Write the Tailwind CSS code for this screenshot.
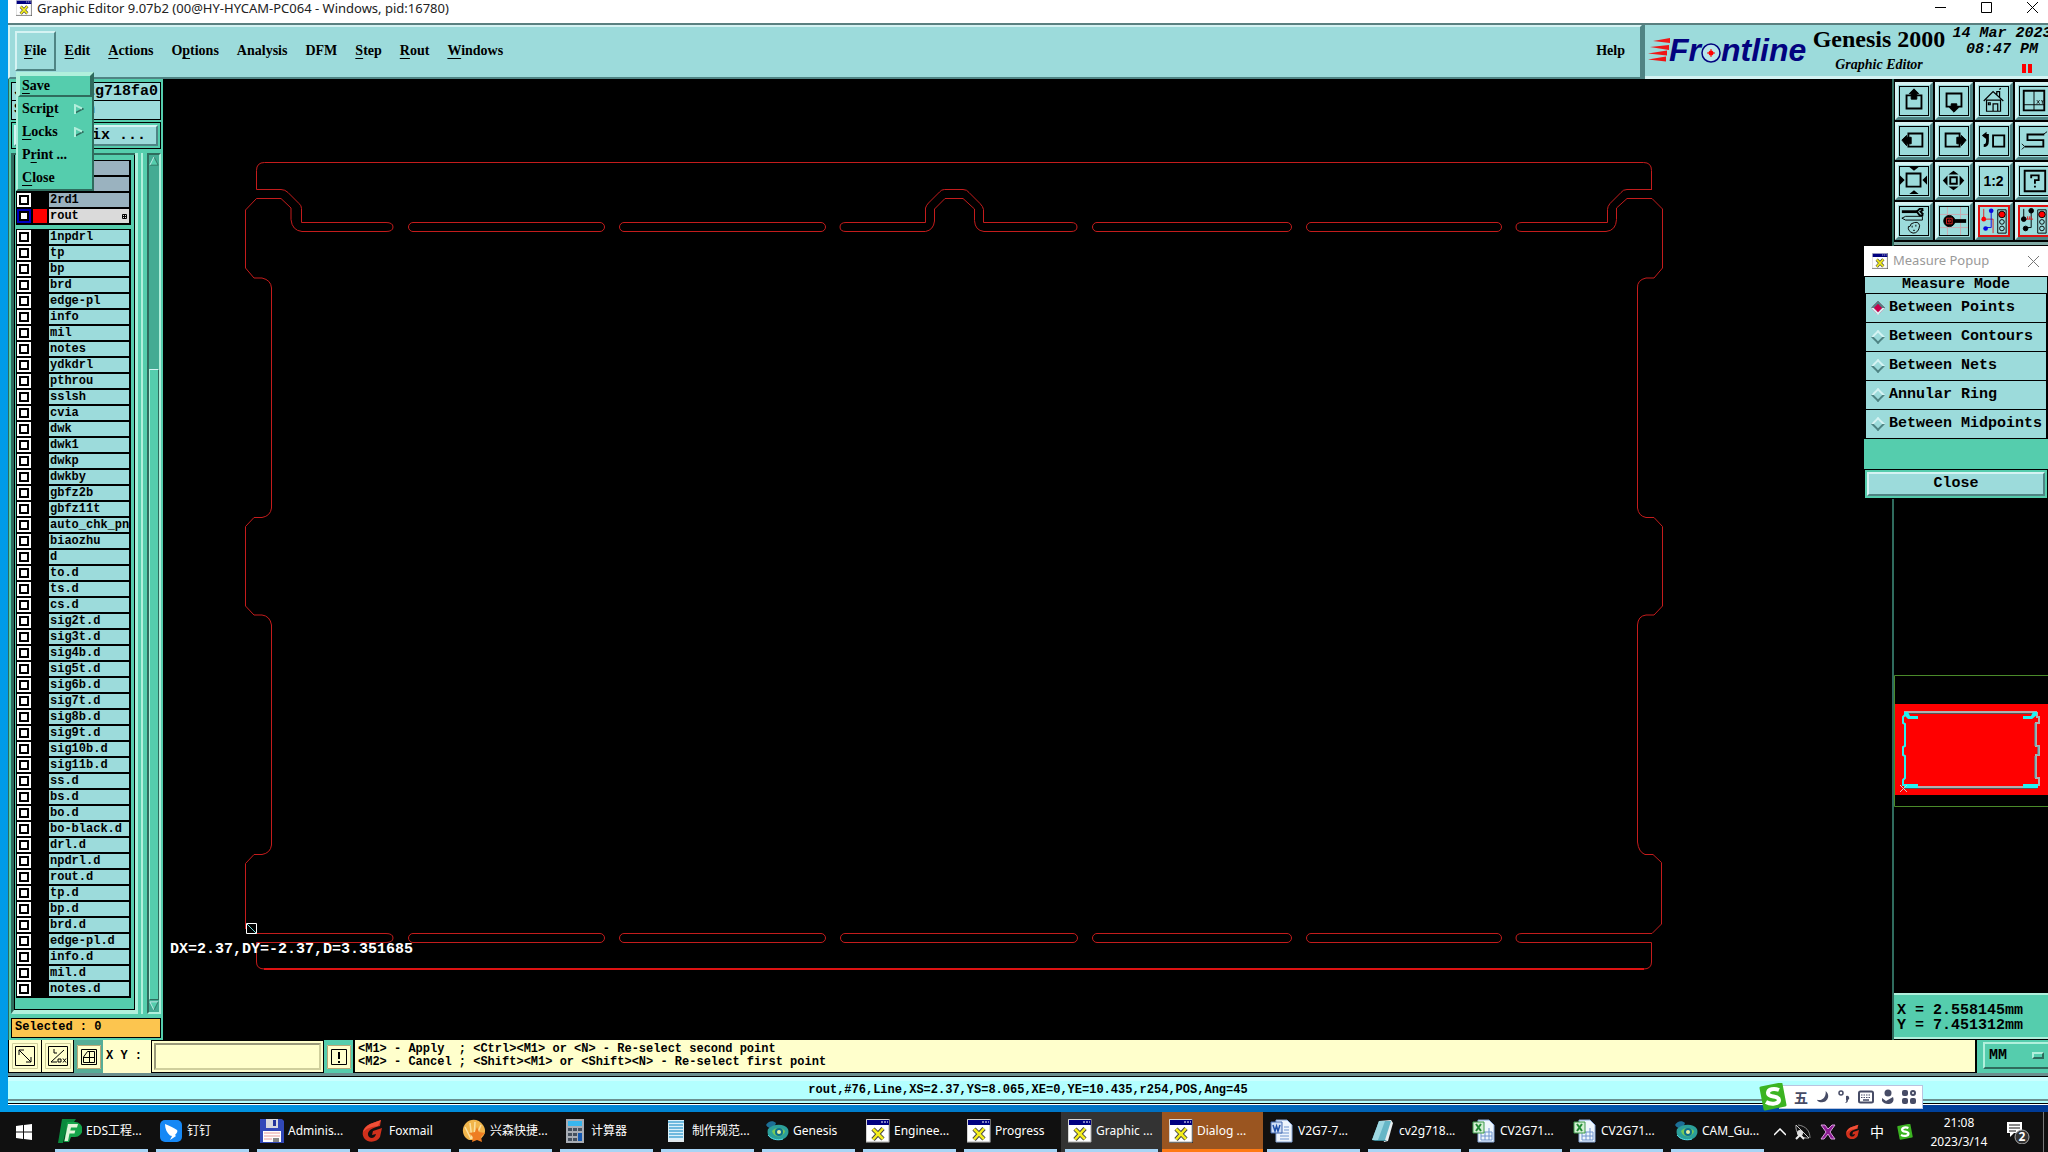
<!DOCTYPE html>
<html lang="en">
<head>
    <meta charset="UTF-8">
    <meta name="viewport" content="width=device-width, initial-scale=1.0">
    <title>Graphic Editor 9.07b2</title>
    <script src="https://cdn.jsdelivr.net/npm/@tailwindcss/browser@4"></script>
</head>
<body class="h-screen overflow-hidden flex flex-col bg-linear-to-r from-[#009be8] via-[#0078c8] to-[#003a96] text-black">

    <!-- Shared icons -->
    <svg class="hidden">
        <symbol id="i-x" viewBox="0 0 24 24">
            <path d="M0 0h24v24H0z" fill="#333"/><path d="M0 0h23v23H0z" fill="#fff" stroke="#aaa"/><path d="M1 1h22v5H1z" fill="#000080"/>
            <path d="M15 3h2M18 3h2M21 3h1" stroke="#fff"/><path d="M7 10l10 10M17 9.500L7 20.500" stroke="#444" stroke-width="4.500"/><path d="M7 10l10 10M17 9.500L7 20.500" stroke="#f4ee1c" stroke-width="2.600"/>
        </symbol>
        <symbol id="i-eds" viewBox="0 0 24 24">
            <path d="M4 0h14l-4 6H9L5 24H0z" fill="#0a8a3c"/><path d="M9 3h8a7 7 0 0 1 0 15h-4l-2 5H6z" fill="#14a44a"/><path d="M10 5h10l-1 3.500h-6l-.7 3h5l-.8 3h-5L10 22H6.500z" fill="#dff5d8"/>
        </symbol>
        <symbol id="i-ding" viewBox="0 0 24 24">
            <rect x="1" y="1" width="22" height="22" rx="5" fill="#1688f5"/><path d="M6 5c5 2 9 4 12 6 1 1 0 3-2 5l1 1-6 4 2-4-2-.500C8 14 6 10 6 5z" fill="#fff"/>
        </symbol>
        <symbol id="i-disk" viewBox="0 0 24 24">
            <path d="M1 0h21l2 2v22H0V0z" fill="#3148b8"/><path d="M6 0h12v9H6z" fill="#d6d8de"/><path d="M13 1h3v6h-3z" fill="#24349a"/><path d="M3 12h18v11H3z" fill="#fff"/><path d="M4 14h16M4 17h16M4 20h8" stroke="#e69a9a"/><path d="M13 19h6v4h-6z" fill="#888"/>
        </symbol>
        <symbol id="i-fox" viewBox="0 0 24 24">
            <path d="M20 1L9 5C2 8 0 14 3 19c3 5 13 5 16-1l2-9-9 3-1 4 4-1c-1 5-7 5-8 1-.500-4 3-7 12-9z" fill="#d0301c"/><path d="M20 1L9 5C5 7 3 10 2 13c4-4 8-5 15-6z" fill="#ef5038"/>
        </symbol>
        <symbol id="i-shell" viewBox="0 0 24 24">
            <path d="M7 21C0 18-1 9 4 4s13-4 17 2 2 11-4 15z" fill="#f1b54b"/><path d="M9 20L3 8M10 20L8 4M12 20l1-17M13 20l6-14" stroke="#fbe0a0" stroke-width="1.500"/><path d="M15 8l2 5 6 1-4 4 1 5-5-2-5 2 1-5-4-4 6-1z" fill="#ee7d22"/>
        </symbol>
        <symbol id="i-calc" viewBox="0 0 24 24">
            <path d="M3 0h18v24H3z" fill="#a8adb5"/><path d="M5 2h14v5H5z" fill="#37b6ee"/><path d="M5 9h4v3H5zM10 9h4v3h-4zM15 9h4v3h-4zM5 14h4v3H5zM10 14h4v3h-4zM5 19h4v3H5zM10 19h4v3h-4z" fill="#45505e"/><path d="M15 14h4v8h-4z" fill="#1458b0"/>
        </symbol>
        <symbol id="i-note" viewBox="0 0 24 24">
            <path d="M4 1h16v21H4z" fill="#d9f0fa"/><path d="M4 3h16M5 6h14M5 9h14M5 12h14M5 15h14M5 18h14" stroke="#4aa7d5" stroke-width="1.500"/><path d="M4 21h16v2H4z" fill="#dfe6ea"/>
        </symbol>
        <symbol id="i-gen" viewBox="0 0 24 24">
            <path d="M1 6c2-4 7-5 10-2l-2 5c-3 1-6 0-8-3z" fill="#1c6f96"/><path d="M3 10c5-5 16-6 20 0 2 6-3 11-10 11S1 17 3 10z" fill="#2ba09a"/><path d="M7 12c3-4 10-4 13 0-1 6-11 8-13 0z" fill="#74c85a"/><circle cx="14" cy="13" r="4" fill="#0c6f8f"/><circle cx="14" cy="13" r="2" fill="#e8f0a0"/><path d="M3 16c3 4 9 6 15 4" stroke="#54dce8" fill="none"/>
        </symbol>
        <symbol id="i-word" viewBox="0 0 24 24">
            <path d="M6 1h11l5 5v17H6z" fill="#eef4fc" stroke="#8aa8d8"/><path d="M10 14h9M10 17h9M10 20h9M14 11h5M14 8h5" stroke="#6f94cf"/><path d="M1 3h11v11H1z" fill="#cfdef5" stroke="#4368b0"/><path d="M3 6l2 6 1.500-5L8 12l2-6" fill="none" stroke="#1f4fa8" stroke-width="1.500"/>
        </symbol>
        <symbol id="i-book" viewBox="0 0 24 24">
            <path d="M8 2l12-1 2 3-5 18-4 1z" fill="#e8eef0"/><path d="M8 2h12l-6 19H1z" fill="#66b6c6"/><path d="M8 2h6L7 21H1z" fill="#9ed8e2"/><path d="M1 21h13l2 1H4z" fill="#3b8797"/>
        </symbol>
        <symbol id="i-excel" viewBox="0 0 24 24">
            <path d="M6 1h11l5 5v17H6z" fill="#eef6fc" stroke="#8aa8d8"/><path d="M9 13h11v8H9zM9 17h11M13 13v8M17 9v12" fill="none" stroke="#6f94cf"/><path d="M1 3h11v11H1z" fill="#d3efd3" stroke="#3d9a4a"/><path d="M4 5l5 7M9 5l-5 7" stroke="#1f8a35" stroke-width="2"/>
        </symbol>
        <symbol id="i-sogou" viewBox="0 0 28 28">
            <path d="M2 5L22 1l4 21-20 4z" fill="#3cb422" stroke="#3cb422" stroke-width="3" stroke-linejoin="round"/><path d="M20 7c-5-2-11-1-11 3 0 5 11 2 11 7 0 4-8 5-13 2" fill="none" stroke="#fff" stroke-width="4"/>
        </symbol>
    </svg>

    <!-- Application window -->
    <div class="ml-2 flex-1 min-h-0 flex flex-col relative bg-black">
        <header class="h-[23px] bg-white flex items-start pl-2 text-[13px] leading-4 font-['Noto_Sans',sans-serif] text-[#222]">
            <svg class="size-4"><use href="#i-x"/></svg>
            <span class="ml-[5px] whitespace-nowrap">Graphic Editor 9.07b2 (00@HY-HYCAM-PC064 - Windows, pid:16780)</span>
            <div class="ml-auto flex pr-[10px] gap-[35px]">
                <button aria-label="Minimize"><svg class="size-[11px] mt-[2px]" viewBox="0 0 11 11"><path d="M0 5.500h11" stroke="#000"/></svg></button>
                <button aria-label="Maximize"><svg class="size-[11px] mt-[2px]" viewBox="0 0 11 11"><path d="M.5.5h10v10H.5z" fill="none" stroke="#000"/></svg></button>
                <button aria-label="Close window"><svg class="size-[11px] mt-[2px]" viewBox="0 0 11 11"><path d="M0 0l11 11M11 0L0 11" stroke="#000"/></svg></button>
            </div>
        </header>

        <div class="h-14 flex bg-[#9cdbdb] border-t-2 border-[#5a8080]">
            <nav class="flex-1 flex items-start border-2 border-t-[#d5f3f3] border-l-[#d5f3f3] border-r-[#4f8484] border-b-[#4f8484] pl-[5px] pr-[6px] pt-1 font-['Liberation_Serif',serif] font-bold text-sm">
                <button class="h-10 px-[7px] border-2 border-t-[#d5f3f3] border-l-[#d5f3f3] border-r-[#4f8484] border-b-[#4f8484]"><u class="underline-offset-3">F</u>ile</button>
                <button class="h-10 px-[7px] border-2 border-transparent"><u class="underline-offset-3">E</u>dit</button>
                <button class="h-10 px-[7px] border-2 border-transparent"><u class="underline-offset-3">A</u>ctions</button>
                <button class="h-10 px-[7px] border-2 border-transparent">O<u class="underline-offset-3">p</u>tions</button>
                <button class="h-10 px-[7px] border-2 border-transparent">Analysis</button>
                <button class="h-10 px-[7px] border-2 border-transparent">DFM</button>
                <button class="h-10 px-[7px] border-2 border-transparent"><u class="underline-offset-3">S</u>tep</button>
                <button class="h-10 px-[7px] border-2 border-transparent"><u class="underline-offset-3">R</u>out</button>
                <button class="h-10 px-[7px] border-2 border-transparent"><u class="underline-offset-3">W</u>indows</button>
                <button class="h-10 px-[7px] border-2 border-transparent ml-auto">Help</button>
            </nav>
            <div class="w-[406px] shrink-0 flex overflow-hidden border-l-3 border-[#4f8484] shadow-[inset_0_-3px_#d5f3f3]">
                <svg class="w-[166px] h-[51px] shrink-0" viewBox="0 0 166 51">
                    <g fill="#ef1616">
                        <path d="M8 16l17-3v5zM5 22l19-2v5zM3 28.500l19-3v5zM3 34.500l18-3v5z"/>
                    </g>
                    <g class="font-['Liberation_Sans',sans-serif] font-bold italic text-[32px]" fill="#03037f">
                        <text x="24" y="36">Fr</text><text x="76" y="36">ntline</text>
                    </g>
                    <circle cx="66" cy="28" r="9" fill="#b9e6ea" stroke="#03037f" stroke-width="1.500"/>
                    <circle cx="66" cy="28" r="2.500" fill="#f00"/><path d="M62 28h8M66 24v8" stroke="#f00"/>
                </svg>
                <div class="w-[136px] shrink-0 text-center font-['Liberation_Serif',serif] font-bold whitespace-nowrap">
                    <div class="text-2xl leading-7">Genesis 2000</div>
                    <div class="text-sm leading-6 italic">Graphic Editor</div>
                </div>
                <div class="w-[110px] shrink-0 pt-px text-center font-['Liberation_Mono',monospace] font-bold italic text-[15px] leading-4">
                    <div>14 Mar 2023</div>
                    <div>08:47 PM</div>
                    <div class="flex gap-[2px] justify-end pr-[25px] pt-[6px]"><i class="w-1 h-[9px] bg-[#f00]"></i><i class="w-1 h-[9px] bg-[#f00]"></i></div>
                </div>
            </div>
        </div>

        <main class="flex-1 min-h-0 flex">
            <!-- Layer list -->
            <aside class="w-[155px] shrink-0 bg-[#55cdad] border-l border-[#2f6b5d] px-[2px] pt-[3px] pb-[2px] flex flex-col font-['Liberation_Mono',monospace] font-bold">
                <div class="border border-black bg-[#9cdbdb] text-[15px] leading-[17px] whitespace-nowrap">
                    <div class="h-[18px] border-b border-black overflow-hidden pl-[2px]">Job : cv2g718fa0</div>
                    <div class="h-[18px] overflow-hidden pl-[2px]">Step: pan</div>
                </div>
                <div class="border border-black mt-[2px] p-[2px] bg-[#55cdad]">
                    <button class="block w-full h-[21px] bg-[#9cdbdb] border-2 border-t-[#d5f3f3] border-l-[#d5f3f3] border-r-[#4f8484] border-b-[#4f8484] text-[15px] leading-4 text-left pl-10 whitespace-nowrap">Matrix ...</button>
                </div>
                <div class="mt-1 flex-1 min-h-0 flex">
                    <div class="w-[124px] border-l-3 border-[#2f6b5d] border-t-2 border-b-4 border-b-[#b0f0dc] flex flex-col">
                        <div class="flex-1 min-h-0 border-x border-b border-black pl-px pr-[3px] overflow-hidden">
                            <div id="board" class="bg-black border-t border-black mt-[5px]"></div>
                            <div id="layers" class="bg-black border-t border-black mt-1"></div>
                        </div>
                    </div>
                    <div class="w-[3px] bg-[#b0f0dc]"></div>
                    <div class="w-[3px] bg-[#55cdad]"></div>
                    <div class="w-[2px] bg-[#b0f0dc]"></div>
                    <div class="w-[4px] bg-[#55cdad]"></div>
                    <div class="flex-1 bg-[#44ab93] border-2 border-t-[#2f6b5d] border-l-[#2f6b5d] border-r-[#b0f0dc] border-b-[#b0f0dc] flex flex-col">
                        <svg class="w-full h-3 shrink-0" viewBox="0 0 12 12"><path d="M6 1l5 10H1z" fill="#55cdad"/><path d="M6 1l5 10H1" fill="none" stroke="#2f6b5d"/><path d="M6 1L1 11" stroke="#d5f3f3"/></svg>
                        <div class="h-[202px]"></div>
                        <div class="flex-1 bg-[#55cdad] border border-t-[#d5f3f3] border-l-[#b0f0dc] border-r-[#2f6b5d] border-b-[#2f6b5d]"></div>
                        <svg class="w-full h-3 shrink-0" viewBox="0 0 12 12"><path d="M6 11L1 1h10z" fill="#55cdad"/><path d="M11 1H1l5 10" fill="none" stroke="#d5f3f3"/><path d="M6 11l5-10" stroke="#2f6b5d"/></svg>
                    </div>
                </div>
                <div class="mt-1 border border-black bg-[#fcc54f] h-5 text-xs leading-4 pl-[3px]">Selected : 0</div>
            </aside>

            <!-- Drawing area -->
            <section class="flex-1 min-w-0 relative bg-black overflow-hidden">
                <svg class="w-full h-full" viewBox="163 79 1729 961" fill="none" stroke="#c41c1c">
                    <!-- top strip with the upper half of the first, fourth and last slots -->
                    <path d="M1651.500 189.500V170.500q0-8-8-8H264.500q-8 0-8 8v19H281q4 0 7 3l11 11q2.500 2 2.500 5v14H386q7 0 7 4.500t-7 4.500H302q-10-1-11-12V208l-10-9.500H256.500L245.500 210v58l8.500 10h8q9 2 9.500 10V508q-1 8-9.500 9.500h-8l-8.500 9V606l8.500 9h8q8 1 9.500 10V845q-1 8-9.500 9.500h-8l-8.500 9V929"/>
                    <path d="M1652 189.500H1627q-4 0-6 3l-11 11q-2.500 3-2.500 6v13H1522q-6 0-6 4.500t6 4.500H1606q10-1 10.500-12V208l10.500-9.500H1652L1662.500 209v59l-8.500 10h-8q-9 2-8.500 10V508q1 8 8.500 9.500h8l8.500 9V606l-8.500 9h-8q-8 1-8.500 10V842q1 10 7.500 12.500h8l8.500 8V924l-9.500 9.500H1522q-6 0-6 4.500t6 4.500H1651.500V962q0 7-8 7"/>
                    <path d="M846 222.500H925.500V208q1-3 3-5l11-11q2-2.500 5-2.500H963q4 0 6 3l11 11q3 3 3.500 6v13H1071q6 0 6 4.500t-6 4.500H984q-9-1-9.500-11V209l-11.500-10.500H945L934.500 209v12q-1 9-9 10.500H846q-6 0-6-4.500t6-4.500z"/>
                    <path d="M256.500 933.500H386q7 0 7 4.500t-7 4.500H256.500V962q0 7 8 7"/>
                    <path d="M264 969H1644" stroke="#dd1212" stroke-width="2"/>
                    <g>
                        <rect x="408.500" y="222.500" width="196" height="9" rx="4.500"/>
                        <rect x="619.500" y="222.500" width="206" height="9" rx="4.500"/>
                        <rect x="1092.500" y="222.500" width="199" height="9" rx="4.500"/>
                        <rect x="1306.500" y="222.500" width="195" height="9" rx="4.500"/>
                        <rect x="408.500" y="933.500" width="196" height="9" rx="4.500"/>
                        <rect x="619.500" y="933.500" width="206" height="9" rx="4.500"/>
                        <rect x="840.500" y="933.500" width="237" height="9" rx="4.500"/>
                        <rect x="1092.500" y="933.500" width="199" height="9" rx="4.500"/>
                        <rect x="1306.500" y="933.500" width="195" height="9" rx="4.500"/>
                    </g>
                    <!-- measure cursor -->
                    <path d="M246.500 923.500h10v10h-10z" fill="#000" stroke="#fff"/><path d="M247 924l9 9" stroke="#7dd"/>
                    <text x="170" y="953" fill="#fff" stroke="none" class="font-['Liberation_Mono',monospace] font-bold text-[15px]">DX=2.37,DY=-2.37,D=3.351685</text>
                </svg>
            </section>

            <!-- Tools and overview -->
            <aside class="w-[156px] shrink-0 overflow-hidden border-l-2 border-[#2f6b5d] flex flex-col">
                <div class="grid grid-cols-[repeat(4,38px)] gap-[2px] pl-px pt-[3px] pb-[2px] border-b-3 border-[#7fa9a4] shrink-0" id="tools"></div>
                <svg class="w-full h-[132px] mt-[430px] shrink-0" viewBox="0 0 154 132" fill="none">
                    <path d="M.5.5H160M.5.5V131.500H160" stroke="#4a8a2a"/>
                    <path d="M1 29h153v91H1z" fill="#f00"/>
                    <g stroke-width="2">
                        <path d="M10 37H143M10 112H143" stroke="#b0b0b0"/><path d="M10 38.500H143M10 113.500H143" stroke="#555" stroke-width="1"/>
                        <path d="M143 37v5l2 0v6l-3 0v23h3v9h-3v23h3v7h-2" stroke="#b0b0b0"/>
                        <path d="M11 40l-2 2v6l2 1v22l-2 1v8l2 1v22l-2 2v6" stroke="#28f0f0"/>
                        <path d="M141 48v23M144 71v9M141 81v22" stroke="#28b8c8" stroke-width="1"/>
                    </g>
                    <path d="M10 37h4l2 4h8v3H14l-4-4zM143 37h-4l-2 4h-8v3h9l5-4zM10 109h14v4H10zM129 109h15v4h-15z" fill="#1ff4f4"/>
                    <path d="M6 110l7 7M13 110l-7 7" stroke="#ccc"/>
                </svg>
                <div class="mt-auto mb-px bg-[#55cdad] border-y-2 border-[#b0f0dc] h-[46px] shrink-0 pl-[3px] pt-2 font-['Liberation_Mono',monospace] font-bold text-[15px] leading-[15px] whitespace-nowrap">
                    <div>X = 2.558145mm</div>
                    <div>Y = 7.451312mm</div>
                </div>
            </aside>
        </main>

        <!-- Command row -->
        <div class="h-[33px] flex bg-black pl-px gap-px font-['Liberation_Mono',monospace] font-bold text-xs">
            <button aria-label="Distance" class="w-8 bg-[#ffffcc] flex items-center justify-center mb-px"><svg class="size-[26px]" viewBox="0 0 26 26" fill="none"><path d="M.5.5h25v25H.5z" stroke="#cfcf9c"/><path d="M3.500 3.500h19v19h-19z" stroke="#000"/><path d="M7 7l12 12M7 12V7h5M19 14v5h-5" stroke="#000"/></svg></button>
            <button aria-label="Angle" class="w-[31px] bg-[#ffffcc] flex items-center justify-center mb-px"><svg class="size-[26px]" viewBox="0 0 26 26" fill="none"><path d="M.5.5h25v25H.5z" stroke="#cfcf9c"/><path d="M3.500 3.500h19v19h-19z" stroke="#000"/><path d="M6 19L19 7M6 19h6M9 6v4h3" stroke="#000"/><path d="M13 16h3v3h-3zM18 15.500l3 4M21 15.500l-3 4" stroke="#000"/></svg></button>
            <button aria-label="Grid" class="w-[29px] bg-[#55ad97] flex items-center justify-center"><svg class="size-6" viewBox="0 0 24 24" fill="none"><path d="M0 0h24v24H0z" fill="#ffffcc"/><path d="M.5.500h23v23H.5z" stroke="#b8a878"/><path d="M4.500 4.500h15v15h-15z" stroke="#000"/><path d="M6.500 17.500V12l4-5.500h7v11zM12.500 7v10M7 12.500h11" stroke="#000"/></svg></button>
            <label for="xy" class="w-12 bg-[#ffffcc] pl-[3px] leading-8 whitespace-pre -ml-px">X Y :</label>
            <div class="bg-[#ffffcc] p-[2px] w-[171px] my-px"><input id="xy" type="text" class="w-full h-full bg-[#ffffcc] border-2 border-t-[#99997a] border-l-[#99997a] border-r-[#cfcf9c] border-b-[#cfcf9c] px-1 outline-none"></div>
            <button aria-label="Alert" class="w-[29px] bg-[#55cdad] flex items-center justify-center"><svg class="size-6" viewBox="0 0 24 24" fill="none"><path d="M0 0h24v24H0z" fill="#ffffcc"/><path d="M.5.500h23v23H.5z" stroke="#b8a878"/><path d="M4.500 4.500h15v15h-15z" stroke="#000"/><path d="M12 7v7M12 16v2" stroke="#000" stroke-width="2"/></svg></button>
            <div class="flex-1 bg-[#ffffcc] pl-[3px] pt-[3px] ml-px mb-px leading-[13px] whitespace-pre">&lt;M1&gt; - Apply  ; &lt;Ctrl&gt;&lt;M1&gt; or &lt;N&gt; - Re-select second point
&lt;M2&gt; - Cancel ; &lt;Shift&gt;&lt;M1&gt; or &lt;Shift&gt;&lt;N&gt; - Re-select first point</div>
            <div class="w-[71px] ml-px bg-[#55cdad] pl-[6px] py-[2px] relative overflow-hidden">
                <select aria-label="Units" class="appearance-none w-[76px] h-[27px] bg-[#55cdad] border-2 border-t-[#b0f0dc] border-l-[#b0f0dc] border-r-[#2f6b5d] border-b-[#2f6b5d] pl-1 text-[15px]"><option>MM</option><option>INCH</option></select>
                <i class="absolute right-1 top-3 w-3 h-[7px] border-2 border-t-[#b0f0dc] border-l-[#b0f0dc] border-r-[#2f6b5d] border-b-[#2f6b5d]"></i>
            </div>
        </div>

        <!-- Status line -->
        <div class="h-8 bg-[#b3ffff] border-t-3 border-[#6a8f8f] flex flex-col">
            <div class="flex-1 border-y border-black flex flex-col pb-[2px]">
                <div class="flex-1 border-t-4 border-t-[#ccffff] border-b-2 border-b-[#6a8f8f] text-center leading-[18px] font-['Liberation_Mono',monospace] font-bold text-xs">rout,#76,Line,XS=2.37,YS=8.065,XE=0,YE=10.435,r254,POS,Ang=45</div>
            </div>
            <div class="h-[2px] bg-white"></div>
        </div>

        <!-- File menu -->
        <div class="absolute left-2 top-[72px] w-[78px] bg-[#55cdad] border-2 border-t-[#b0f0dc] border-l-[#b0f0dc] border-r-[#2f6b5d] border-b-[#2f6b5d] font-['Liberation_Serif',serif] font-bold text-sm leading-[23px]">
            <button class="block w-full h-[23px] text-left pl-[2px] border-2 border-t-[#b0f0dc] border-l-[#b0f0dc] border-r-[#2f6b5d] border-b-[#2f6b5d] leading-5"><u class="underline-offset-3">S</u>ave</button>
            <button class="flex w-full items-center pl-1 pr-2 justify-between"><span>Scri<u class="underline-offset-3">p</u>t</span><svg class="size-[10px]" viewBox="0 0 10 10"><path d="M1 1l8 4-8 4z" fill="#55cdad" stroke="#2f6b5d" stroke-width="1.500"/><path d="M1 10V1l7 3.500" fill="none" stroke="#b0f0dc" stroke-width="2"/></svg></button>
            <button class="flex w-full items-center pl-1 pr-2 justify-between"><span><u class="underline-offset-3">L</u>ocks</span><svg class="size-[10px]" viewBox="0 0 10 10"><path d="M1 1l8 4-8 4z" fill="#55cdad" stroke="#2f6b5d" stroke-width="1.500"/><path d="M1 10V1l7 3.500" fill="none" stroke="#b0f0dc" stroke-width="2"/></svg></button>
            <button class="block w-full text-left pl-1">P<u class="underline-offset-3">r</u>int ...</button>
            <button class="block w-full text-left pl-1"><u class="underline-offset-3">C</u>lose</button>
        </div>

        <!-- Measure popup -->
        <div class="absolute right-0 top-[246px] w-[184px] bg-[#55cdad] font-['Liberation_Mono',monospace] font-bold text-[15px]">
            <div class="h-[30px] bg-white flex items-center pl-2 pr-[9px] font-['Noto_Sans',sans-serif] font-normal text-[13px] text-[#999]">
                <svg class="size-4"><use href="#i-x"/></svg><span class="ml-[5px]">Measure Popup</span>
                <button aria-label="Close popup" class="ml-auto"><svg class="size-[11px]" viewBox="0 0 11 11"><path d="M0 0l11 11M11 0L0 11" stroke="#777"/></svg></button>
            </div>
            <fieldset>
                <legend class="w-full h-[18px] leading-4 border border-black bg-[#9cdbdb] text-center">Measure Mode</legend>
                <div class="border-x border-b border-black bg-black grid gap-px whitespace-nowrap">
                    <label class="h-7 bg-[#9cdbdb] flex items-center gap-[6px] pl-[7px] mx-px"><input type="radio" name="mode" checked class="appearance-none size-[10px] shrink-0 rotate-45 border-2 border-t-[#4f8484] border-l-[#4f8484] border-r-[#d5f3f3] border-b-[#d5f3f3] checked:bg-[#c8004c]">Between Points</label>
                    <label class="h-7 bg-[#9cdbdb] flex items-center gap-[6px] pl-[7px] mx-px"><input type="radio" name="mode" class="appearance-none size-[10px] shrink-0 rotate-45 border-2 border-t-[#d5f3f3] border-l-[#d5f3f3] border-r-[#4f8484] border-b-[#4f8484]">Between Contours</label>
                    <label class="h-7 bg-[#9cdbdb] flex items-center gap-[6px] pl-[7px] mx-px"><input type="radio" name="mode" class="appearance-none size-[10px] shrink-0 rotate-45 border-2 border-t-[#d5f3f3] border-l-[#d5f3f3] border-r-[#4f8484] border-b-[#4f8484]">Between Nets</label>
                    <label class="h-7 bg-[#9cdbdb] flex items-center gap-[6px] pl-[7px] mx-px"><input type="radio" name="mode" class="appearance-none size-[10px] shrink-0 rotate-45 border-2 border-t-[#d5f3f3] border-l-[#d5f3f3] border-r-[#4f8484] border-b-[#4f8484]">Annular Ring</label>
                    <label class="h-7 bg-[#9cdbdb] flex items-center gap-[6px] pl-[7px] mx-px"><input type="radio" name="mode" class="appearance-none size-[10px] shrink-0 rotate-45 border-2 border-t-[#d5f3f3] border-l-[#d5f3f3] border-r-[#4f8484] border-b-[#4f8484]">Between Midpoints</label>
                </div>
            </fieldset>
            <div class="mt-[30px] border border-black p-[2px]">
                <button class="block w-full h-6 leading-5 bg-[#9cdbdb] border-2 border-t-[#d5f3f3] border-l-[#d5f3f3] border-r-[#4f8484] border-b-[#4f8484]">Close</button>
            </div>
        </div>
    </div>

    <!-- Input method bar -->
    <div class="absolute right-[125px] bottom-[41px] flex items-center">
        <svg class="size-7 -mr-2 relative z-10"><use href="#i-sogou"/></svg>
        <div class="h-6 bg-white border border-[#b9c4e0] pl-[14px] pr-[6px] flex items-center gap-2 text-[#474c66] font-['Noto_Sans_CJK_SC',sans-serif] font-bold text-sm leading-5">
            <span>五</span>
            <svg class="size-[14px]" viewBox="0 0 16 16"><path d="M11 1c6 5 2 13-4 13-3 0-5-1-6-3 6 2 11-3 10-10z" fill="currentColor"/></svg>
            <svg class="w-3 h-4" viewBox="0 0 12 16"><circle cx="3" cy="4" r="2" fill="none" stroke="currentColor" stroke-width="1.500"/><path d="M8 7a2 2 0 1 1 2 4c0 2-1 3-3 3 1-1 2-2 1-3z" fill="currentColor"/></svg>
            <svg class="size-4" viewBox="0 0 16 16"><rect x="1" y="2.500" width="14" height="11" rx="1.500" fill="none" stroke="currentColor" stroke-width="2"/><path d="M3 6h10M3 8.500h10" stroke="currentColor" stroke-dasharray="1.500 1"/><path d="M5 11h6" stroke="currentColor" stroke-width="1.500"/></svg>
            <svg class="w-3 h-4" viewBox="0 0 12 16"><circle cx="6" cy="4" r="3.500" fill="currentColor"/><path d="M0 9l4 3 7-4c3 8-8 9-11 4z" fill="currentColor"/></svg>
            <svg class="size-[14px]" viewBox="0 0 14 14" fill="currentColor"><rect width="6" height="6" rx="2"/><circle cx="11" cy="3" r="2" fill="none" stroke="currentColor" stroke-width="2"/><rect y="8" width="6" height="6" rx="2"/><rect x="8" y="8" width="6" height="6" rx="2"/></svg>
        </div>
    </div>

    <!-- Taskbar -->
    <footer class="mt-[7px] h-10 shrink-0 bg-[#101010] text-white flex font-['Noto_Sans','Noto_Sans_CJK_SC',sans-serif] text-xs">
        <button aria-label="Start" class="w-[51px] shrink-0 flex items-center pl-4"><svg class="size-4" viewBox="0 0 16 16" fill="#fff"><path d="M0 2l7-1v6.500H0zM8 1l8-1v7.500H8zM0 8.500h7V15l-7-1zM8 8.500h8V16l-8-1z"/></svg></button>
        <div id="tasks" class="flex min-w-0"></div>
        <div class="ml-auto flex items-center shrink-0">
            <div class="flex items-center gap-[9px] pr-[26px]">
                <svg class="w-3 h-2" viewBox="0 0 12 8"><path d="M0 7l6-6 6 6" fill="none" stroke="#fff" stroke-width="1.500"/></svg>
                <svg class="size-4" viewBox="0 0 16 16" fill="none"><path d="M1 1c-1 8 5 14 13 13" stroke="#aaa"/><path d="M1 1l13 13" stroke="#ccc"/><path d="M3 1c8 1 12 6 12 13" stroke="#888"/><circle cx="5" cy="9" r="3" fill="#ddd"/><path d="M1 15l4-4 4 4" stroke="#eee" stroke-width="2"/></svg>
                <svg class="size-4" viewBox="0 0 16 16"><path d="M1 1h4l3 4 4-4h3L10 8l5 7h-4l-3-5-4 5H1l5-7z" fill="#8d1c94" stroke="#d7a0dc"/></svg>
                <svg class="size-4"><use href="#i-fox"/></svg>
                <span class="text-sm">中</span>
                <svg class="size-4 ml-1"><use href="#i-sogou"/></svg>
            </div>
            <div class="w-[60px] mr-[17px] text-center leading-[19px] -ml-[10px]"><div>21:08</div><div>2023/3/14</div></div>
            <svg class="size-6 mr-[13px]" viewBox="0 0 24 24"><path d="M1 2h15v11H8l-4 4v-4H1z" fill="#fff"/><path d="M3 5h11M3 8h11M3 11h7" stroke="#111"/><circle cx="16" cy="17" r="7" fill="#333" stroke="#aaa"/><text x="16" y="21" text-anchor="middle" fill="#fff" class="text-xs font-bold">2</text></svg>
            <div class="w-[5px] h-10 border-l border-[#777]"></div>
        </div>
    </footer>

    <script>
        const board = ['', '', '2rd1', 'rout'];
        const layers = ['1npdrl', 'tp', 'bp', 'brd', 'edge-pl', 'info', 'mil', 'notes', 'ydkdrl', 'pthrou', 'sslsh', 'cvia',
            'dwk', 'dwk1', 'dwkp', 'dwkby', 'gbfz2b', 'gbfz11t', 'auto_chk_pnl', 'biaozhu', 'd', 'to.d', 'ts.d', 'cs.d',
            'sig2t.d', 'sig3t.d', 'sig4b.d', 'sig5t.d', 'sig6b.d', 'sig7t.d', 'sig8b.d', 'sig9t.d', 'sig10b.d', 'sig11b.d',
            'ss.d', 'bs.d', 'bo.d', 'bo-black.d', 'drl.d', 'npdrl.d', 'rout.d', 'tp.d', 'bp.d', 'brd.d', 'edge-pl.d',
            'info.d', 'mil.d', 'notes.d'];

        function layerRow(name, kind) {
            const color = { board: 'bg-[#9ab2bf]', active: 'bg-[#dadada]', plain: 'bg-[#9cdbdb]' }[kind];
            const box = kind === 'active' ? 'border-[#0000c0]' : 'border-white';
            const swatch = kind === 'active' ? 'bg-[#f00]' : 'bg-black';
            const mark = kind === 'active' ? '<svg class="size-[5px] mr-[2px] ml-auto my-auto" viewBox="0 0 5 5"><path d="M.5.5h4v4h-4zM2.500 0v5M0 2.500h5" fill="none" stroke="#000"/></svg>' : '';
            return `<label class="h-4 flex items-start pl-px pr-[2px] text-xs leading-[14px]">
                <input type="checkbox" aria-label="${name}" class="appearance-none size-[14px] shrink-0 bg-white border-2 ${box} shadow-[inset_0_0_0_2px_#000]">
                <span class="w-[14px] h-[14px] mx-[2px] shrink-0 ${swatch}"></span>
                <span class="flex-1 h-[14px] flex overflow-hidden whitespace-nowrap pl-px ${color}">${name}${mark}</span>
            </label>`;
        }

        document.getElementById('board').innerHTML = board.map(n => layerRow(n, n === 'rout' ? 'active' : 'board')).join('');
        document.getElementById('layers').innerHTML = layers.map(n => layerRow(n, 'plain')).join('');

        const traffic = '<path d="M19 3h9v25h-9z" fill="none" stroke="#000"/><circle cx="23.500" cy="8" r="3.500" fill="#f00" stroke="#000"/><circle cx="23.500" cy="16" r="2.500" fill="none" stroke="#000"/><circle cx="23.500" cy="23" r="2.500" fill="none" stroke="#000"/>';
        const tools = [
            ['Pan up', '<path d="M7 9h16v14H7z" stroke-width="2"/><path d="M15 2l5 5h-2v6h-6V7h-2z" fill="#000"/>'],
            ['Pan down', '<path d="M7 7h16v14H7z" stroke-width="2"/><path d="M15 27l5-5h-2v-4h-6v4h-2z" fill="#000"/>'],
            ['Home', '<path d="M7 14h15v12H7zM4 15L14 5l11 10M18 8V5h3v6M14 26v-8h5v8M9 17h2v2H9zM21 3l1-2" stroke-width="1.300"/>'],
            ['XY view', '<path d="M4 4h22v21H4z" stroke-width="2"/><path d="M15 4v21M4 19h22"/><path d="M18 14l3 4M21 14l-3 4M23 14l1 2 1-2M24 16v2" stroke-width=".800"/>'],
            ['Pan left', '<path d="M9 7h15v14H9z" stroke-width="2"/><path d="M2 14l5-5v2h5v7H7v2z" fill="#000"/>'],
            ['Pan right', '<path d="M6 7h15v14H6z" stroke-width="2"/><path d="M28 14l-5-5v2h-5v7h5v2z" fill="#000"/>'],
            ['Previous', '<path d="M14 9h12v12H14z" stroke-width="2"/><path d="M4 9h4v6q0 5-4 5" stroke-width="3"/><path d="M2 9l5-4v8z" fill="#000" stroke="none"/>'],
            ['Serpentine', '<path d="M26 8H8v6h17v7H5" stroke-width="2"/><path d="M25 8l4-3M2 18l3 3-3 3"/>'],
            ['Zoom in', '<path d="M7 7h15v14H7z" stroke-width="2"/><path d="M10 0h10l-5 4zM10 29h10l-5-4zM0 9v10l5-5zM29 9v10l-5-5z" fill="#000" stroke="none"/>'],
            ['Zoom out', '<path d="M11 11h7v7h-7z" stroke-width="2"/><path d="M9 8h11l-5.500-4zM9 21h11l-5.500 4zM8 9v11l-5-5.500zM21 9v11l5-5.500z" fill="#000" stroke="none"/>'],
            ['Scale', '<text x="14.500" y="20" text-anchor="middle" fill="#000" stroke="none" class="font-[\'Liberation_Sans\',sans-serif] font-bold text-[15px]">1:2</text>'],
            ['Help', '<path d="M5 4h22v22H5z" stroke-width="2"/><path d="M12 12V9h8v5h-4v4M16 20v2" stroke-width="2"/>'],
            ['Options', '<path d="M2 5h17" stroke-width="3"/><path d="M25 2h-4l-3 3 3 4h4M25 3l-3 2 3 3" stroke-width="2"/><path d="M2 12l4-2h18v4H6z"/><path d="M12 18q8-4 9 2-1 8-7 8-6-2-5-7 2 1 3-3zM13 20v2M17 19v2M14 25h2"/>'],
            ['Probe', '<path d="M8 0v30M22 0v30M0 8h30M0 22h30" stroke="#c9a8b0"/><circle cx="10" cy="15" r="6" fill="#000"/><path d="M15 15h13" stroke-width="4"/><path d="M7 12h6v6H7zM9 14h2v2H9z" stroke="#e02020"/>'],
            ['Online check', '<path d="M4 2v11h10v15M4 13v-3" stroke="#e02020"/><path d="M12 4v18H6" stroke="#0808e0"/><circle cx="4" cy="13" r="2.500" fill="#f00" stroke="none"/><circle cx="12" cy="4" r="2.500" fill="#0808e0" stroke="none"/><circle cx="6" cy="23" r="2.500" fill="#0808e0" stroke="none"/>' + traffic, true],
            ['Offline check', '<path d="M4 2v11M12 4v18H6"/><path d="M6 13h8M8 10v3M10 10v3M12 10v3" stroke="#e02020"/><circle cx="4" cy="13" r="2.500" fill="#000"/><circle cx="12" cy="4" r="2.500" fill="#000"/><circle cx="6" cy="23" r="2.500" fill="#000"/>' + traffic, true]
        ];
        document.getElementById('tools').innerHTML = tools.map(([name, art, on]) =>
            `<button aria-label="${name}" class="size-[38px] bg-[#9cdbdb] border-3 border-t-[#d5f3f3] border-l-[#d5f3f3] border-r-[#4f8484] border-b-[#4f8484]">
                <span class="flex size-full items-center justify-center ${on ? 'border-2 border-[#e01010]' : ''}"><svg class="${on ? 'size-[28px]' : 'size-[30px] border border-black'}" viewBox="0 0 30 30" fill="none" stroke="#000">${art}</svg></span>
            </button>`).join('');

        const tasks = [['eds', 'EDS工程...'], ['ding', '钉钉'], ['disk', 'Adminis...'], ['fox', 'Foxmail'], ['shell', '兴森快捷...'],
            ['calc', '计算器'], ['note', '制作规范...'], ['gen', 'Genesis'], ['x', 'Enginee...'], ['x', 'Progress'], ['x', 'Graphic ...', 'open'],
            ['x', 'Dialog ...', 'alert'], ['word', 'V2G7-7...'], ['book', 'cv2g718...'], ['excel', 'CV2G71...'], ['excel', 'CV2G71...'], ['gen', 'CAM_Gu...']];
        document.getElementById('tasks').innerHTML = tasks.map(([icon, text, state]) => {
            const bg = { open: 'bg-[#333]', alert: 'bg-[#9a5520]' }[state] || '';
            const line = { open: 'bg-[#a8d4f5]', alert: 'bg-[#ff7a14] -mx-1' }[state] || 'bg-[#a8d4f5]';
            return `<button class="w-[101px] shrink-0 px-1 flex flex-col ${bg}">
                <span class="flex-1 flex items-center gap-1 pl-[3px] whitespace-nowrap"><svg class="size-6 shrink-0"><use href="#i-${icon}"/></svg>${text}</span>
                <span class="h-[3px] self-stretch ${line}"></span>
            </button>`;
        }).join('');
    </script>
</body>
</html>
